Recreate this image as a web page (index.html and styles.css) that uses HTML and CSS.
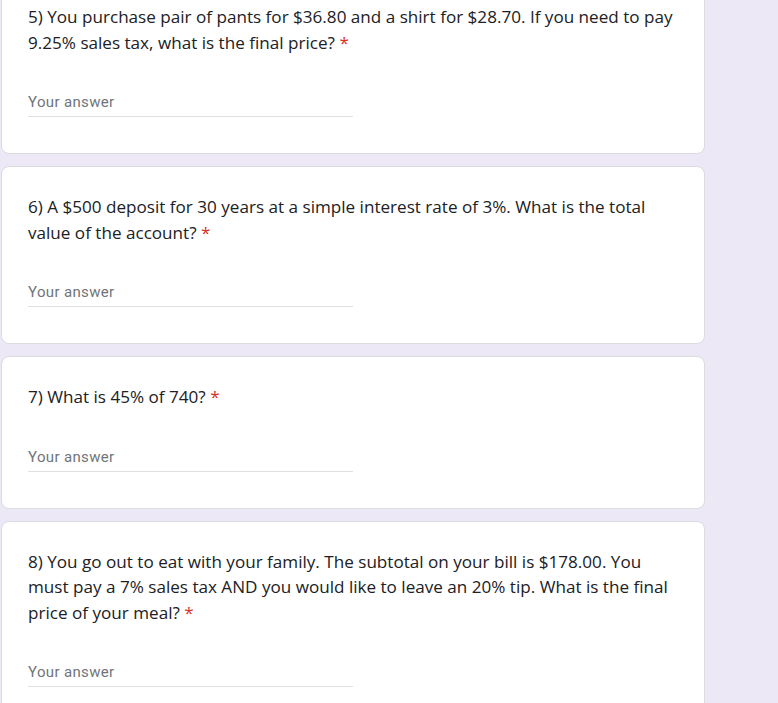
FILE: index.html
```html
<!DOCTYPE html>
<html lang="en">
<head>
<meta charset="utf-8">
<title>Form</title>
<link rel="stylesheet" href="styles.css">
</head>
<body>
<div class="form">
  <div class="card">
    <div class="title">5) You purchase pair of pants for $36.80 and a shirt for $28.70. If you need to pay<br>9.25% sales tax, what is the final price? <span class="req">*</span></div>
    <div class="answer">Your answer</div>
  </div>
  <div class="card">
    <div class="title">6) A $500 deposit for 30 years at a simple interest rate of 3%. What is the total<br>value of the account? <span class="req">*</span></div>
    <div class="answer">Your answer</div>
  </div>
  <div class="card">
    <div class="title">7) What is 45% of 740? <span class="req">*</span></div>
    <div class="answer">Your answer</div>
  </div>
  <div class="card">
    <div class="title">8) You go out to eat with your family. The subtotal on your bill is $178.00. You<br>must pay a 7% sales tax AND you would like to leave an 20% tip. What is the final<br>price of your meal? <span class="req">*</span></div>
    <div class="answer">Your answer</div>
  </div>
</div>
</body>
</html>
```

FILE: styles.css
```css
html, body {
  margin: 0;
  padding: 0;
  background: #ece8f6;
  overflow: hidden;
}

.form {
  margin: -24px 0 0 1px;
  width: 704px;
  display: flex;
  flex-direction: column;
  gap: 12px;
}

.card {
  background: #ffffff;
  border: 1px solid #dadce0;
  border-radius: 8px;
  padding: 27px 26px 36px 26px;
  display: flex;
  flex-direction: column;
  gap: 37px;
}

.title {
  font-family: "Open Sans", "Liberation Sans", sans-serif;
  font-size: 17.1px;
  line-height: 25.5px;
  color: #202124;
  white-space: nowrap;
}

.req {
  color: #d93025;
}

.answer {
  width: 325px;
  font-family: Roboto, "Liberation Sans", sans-serif;
  font-size: 15px;
  letter-spacing: 0.35px;
  line-height: 20px;
  color: #70757a;
  padding-bottom: 4px;
  border-bottom: 1px solid #e0e0e0;
}
```
